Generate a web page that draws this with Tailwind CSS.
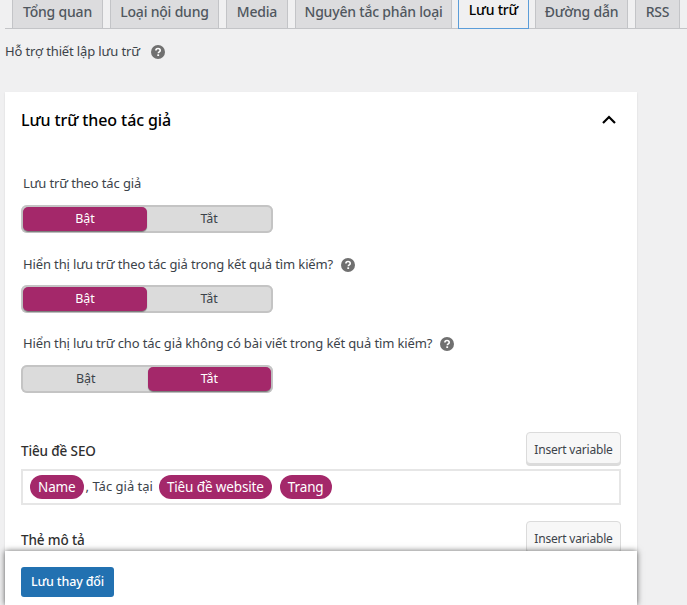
<!DOCTYPE html>
<html lang="en">
<head>
  <meta charset="UTF-8">
  <meta name="viewport" content="width=device-width, initial-scale=1.0">
  <title>Lưu trữ</title>
  <script src="https://cdn.jsdelivr.net/npm/@tailwindcss/browser@4"></script>
</head>
<body class="relative h-[605px] w-[687px] overflow-hidden bg-[#f0f0f1] font-['Noto_Sans','Open_Sans',sans-serif] text-[13px] tracking-[-0.13px] text-[#3c434a]">
  <!-- tabs -->
  <nav class="ml-[5px] flex h-[29px] items-end gap-[7px] border-b border-[#c3c4c7] pl-[7px] text-[14px] font-medium tracking-[-0.2px] text-[#50575e]">
    <a class="flex h-[28px] w-[91px] items-center justify-center border-x border-[#c3c4c7] bg-[#dcdcde] pb-[6px]">Tổng quan</a>
    <a class="flex h-[28px] w-[109px] items-center justify-center border-x border-[#c3c4c7] bg-[#dcdcde] pb-[6px]">Loại nội dung</a>
    <a class="flex h-[28px] w-[62px] items-center justify-center border-x border-[#c3c4c7] bg-[#dcdcde] pb-[6px]">Media</a>
    <a class="flex h-[28px] w-[157px] items-center justify-center border-x border-[#c3c4c7] bg-[#dcdcde] pb-[6px]">Nguyên tắc phân loại</a>
    <a class="relative top-px -ml-px flex h-[30px] w-[71px] items-center justify-center border border-t-0 border-[#5b9dd9] bg-[#f0f0f1] pb-[8px] text-black">Lưu trữ</a>
    <a class="-ml-px flex h-[28px] w-[93px] items-center justify-center border-x border-[#c3c4c7] bg-[#dcdcde] pb-[6px]">Đường dẫn</a>
    <a class="flex h-[28px] w-[45px] items-center justify-center border-x border-[#c3c4c7] bg-[#dcdcde] pb-[6px]">RSS</a>
  </nav>

  <div class="ml-[5px] mt-[13px] flex h-[20px] items-center gap-[11px]">
    <span>Hỗ trợ thiết lập lưu trữ</span>
    <svg class="h-[14px] w-[14px]" viewBox="0 0 14 14"><circle cx="7" cy="7" r="7" fill="#707070"/><path d="M4.9 5.4C4.9 4.2 5.9 3.5 7 3.5s2.2.7 2.2 1.9c0 1.6-1.9 1.5-1.9 2.9" fill="none" stroke="#fff" stroke-width="1.6"/><rect x="6.3" y="9.3" width="1.8" height="1.7" fill="#fff"/></svg>
  </div>

  <!-- card -->
  <section class="ml-[5px] mt-[30px] h-[520px] w-[632px] bg-white px-[16px] shadow-[0_1px_2px_rgba(0,0,0,0.1)]">
    <header class="flex h-[56px] items-center justify-between pr-[5px]">
      <h2 class="text-[16px] font-medium tracking-[-0.1px] text-black">Lưu trữ theo tác giả</h2>
      <svg class="h-[10px] w-[14px]" viewBox="0 0 14 10"><path d="M1 8l6-6 6 6" fill="none" stroke="#000" stroke-width="2.2"/></svg>
    </header>

    <div class="pl-[2px]">
      <div class="mt-[26px] flex h-[20px] items-center">Lưu trữ theo tác giả</div>
      <div class="mt-[11px] flex h-[28px] w-[252px] -ml-[2px] rounded-[6px] bg-[#dbdbdb] p-[2px] shadow-[inset_0_0_0_2px_#c4c4c4]">
        <div class="flex flex-1 items-center justify-center rounded-[5px] bg-[#a4286a] text-[12.5px] text-white shadow-[0_1px_1px_rgba(0,0,0,0.4)]">Bật</div>
        <div class="flex flex-1 items-center justify-center text-[12.5px]">Tắt</div>
      </div>

      <div class="mt-[22px] flex h-[20px] items-center gap-[8px]">
        <span>Hiển thị lưu trữ theo tác giả trong kết quả tìm kiếm?</span>
        <svg class="h-[14px] w-[14px]" viewBox="0 0 14 14"><circle cx="7" cy="7" r="7" fill="#707070"/><path d="M4.9 5.4C4.9 4.2 5.9 3.5 7 3.5s2.2.7 2.2 1.9c0 1.6-1.9 1.5-1.9 2.9" fill="none" stroke="#fff" stroke-width="1.6"/><rect x="6.3" y="9.3" width="1.8" height="1.7" fill="#fff"/></svg>
      </div>
      <div class="mt-[10px] flex h-[28px] w-[252px] -ml-[2px] rounded-[6px] bg-[#dbdbdb] p-[2px] shadow-[inset_0_0_0_2px_#c4c4c4]">
        <div class="flex flex-1 items-center justify-center rounded-[5px] bg-[#a4286a] text-[12.5px] text-white shadow-[0_1px_1px_rgba(0,0,0,0.4)]">Bật</div>
        <div class="flex flex-1 items-center justify-center text-[12.5px]">Tắt</div>
      </div>

      <div class="mt-[21px] flex h-[20px] items-center gap-[8px]">
        <span>Hiển thị lưu trữ cho tác giả không có bài viết trong kết quả tìm kiếm?</span>
        <svg class="h-[14px] w-[14px]" viewBox="0 0 14 14"><circle cx="7" cy="7" r="7" fill="#707070"/><path d="M4.9 5.4C4.9 4.2 5.9 3.5 7 3.5s2.2.7 2.2 1.9c0 1.6-1.9 1.5-1.9 2.9" fill="none" stroke="#fff" stroke-width="1.6"/><rect x="6.3" y="9.3" width="1.8" height="1.7" fill="#fff"/></svg>
      </div>
      <div class="mt-[11px] flex h-[28px] w-[252px] -ml-[2px] rounded-[6px] bg-[#dbdbdb] p-[2px] shadow-[inset_0_0_0_2px_#c4c4c4]">
        <div class="ml-px flex flex-1 items-center justify-center text-[12.5px]">Bật</div>
        <div class="flex flex-1 items-center justify-center rounded-[5px] bg-[#a4286a] text-[12.5px] text-white shadow-[0_1px_1px_rgba(0,0,0,0.4)]">Tắt</div>
      </div>
    </div>

    <div class="mt-[39px] flex h-[32px] items-center justify-between">
      <span class="mt-[7px] text-[13.5px] font-medium text-[#303030]">Tiêu đề SEO</span>
      <button class="h-[32px] w-[95px] rounded-[4px] border border-[#dbdbdb] bg-[#f7f7f7] pt-[3px] text-[12px] tracking-[-0.2px] shadow-[0_2px_0_#dbdbdb]">Insert variable</button>
    </div>
    <div class="mt-[5px] flex h-[36px] w-[600px] items-center border-2 border-[#e6e6e6] pl-[7px] text-[13px]">
      <span class="flex h-[24px] items-center rounded-full bg-[#a4286a] px-[8px] text-[13.5px] text-white">Name</span>
      <span class="ml-[2px] tracking-normal">, Tác giả tại</span>
      <span class="ml-[6px] flex h-[24px] items-center rounded-full bg-[#a4286a] px-[8px] text-[13.5px] text-white">Tiêu đề website</span>
      <span class="ml-[8px] flex h-[24px] items-center rounded-full bg-[#a4286a] px-[8px] text-[13.5px] text-white">Trang</span>
    </div>
    <div class="mt-[16px] flex h-[32px] items-center justify-between">
      <span class="mt-[7px] text-[13.5px] font-medium text-[#303030]">Thẻ mô tả</span>
      <button class="h-[32px] w-[95px] rounded-[4px] border border-[#dbdbdb] bg-[#f7f7f7] pt-[3px] text-[12px] tracking-[-0.2px] shadow-[0_2px_0_#dbdbdb]">Insert variable</button>
    </div>
  </section>

  <!-- sticky save bar -->
  <div class="absolute left-[5px] top-[551px] flex h-[54px] w-[632px] items-start bg-white pl-[16px] pt-[16px] shadow-[0_0_6px_rgba(0,0,0,0.6)]">
    <button class="h-[30px] w-[93px] rounded-[3px] bg-[#2271b1] text-[12.5px] font-medium tracking-[-0.15px] text-white">Lưu thay đổi</button>
  </div>
</body>
</html>
